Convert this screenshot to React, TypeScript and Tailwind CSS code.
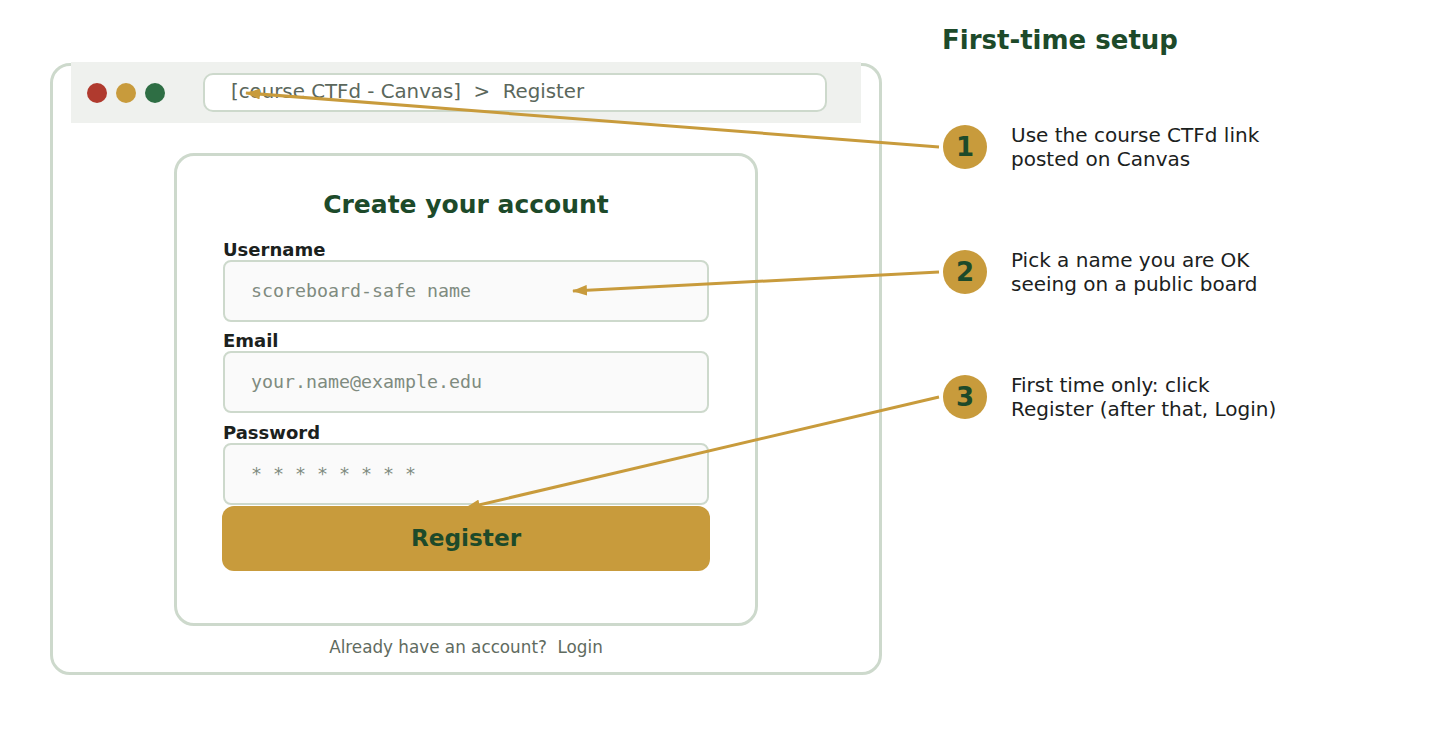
import React from "react";

const GOLD = "#c89b3c";

function Field({ label, value, gap }: { label: string; value: string; gap: string }) {
  return (
    <div className={`flex flex-col ${gap}`}>
      <div className="h-[20px] leading-[20px] text-[18px] font-bold text-[#1b211d]">{label}</div>
      <div className="w-[486px] h-[62px] rounded-[8px] border-2 border-[#cdd9cc] bg-[#fafafa] pl-[26px] flex items-center">
        <span className="whitespace-pre text-[18.3px] text-[#7f8b80]" style={{ fontFamily: '"DejaVu Sans Mono", "Liberation Mono", monospace' }}>
          {value}
        </span>
      </div>
    </div>
  );
}

function Step({ n, lines }: { n: number; lines: string[] }) {
  return (
    <div className="flex items-center h-[48px]">
      <div className="w-[44px] h-[44px] rounded-full bg-[#c89b3c] flex items-center justify-center text-[26px] font-bold text-[#1d4a2a]">
        {n}
      </div>
      <div className="ml-[24px] text-[20px] leading-[24px] text-[#1b211d]">
        {lines.map((l) => (
          <div key={l}>{l}</div>
        ))}
      </div>
    </div>
  );
}

export default function App() {
  return (
    <div
      className="relative w-[1431px] h-[738px] bg-white flex items-start overflow-hidden"
      style={{ fontFamily: '"DejaVu Sans", "Liberation Sans", sans-serif' }}
    >
      {/* browser window mock */}
      <div className="ml-[50px] mt-[63px]">
        <div className="w-[832px] h-[612px] rounded-[20px] border-[3px] border-[#cdd9cc] bg-white flex flex-col items-center">
          <div className="-mt-[4px] w-[790px] h-[61px] bg-[#eff1ee] flex items-center pl-[16px]">
            <div className="flex gap-[9px]">
              <span className="w-[20px] h-[20px] rounded-full bg-[#b03a2e]" />
              <span className="w-[20px] h-[20px] rounded-full bg-[#c89b3c]" />
              <span className="w-[20px] h-[20px] rounded-full bg-[#2e6e44]" />
            </div>
            <div className="ml-[38px] w-[624px] h-[39px] rounded-[10px] border-2 border-[#cdd9cc] bg-white flex items-center pl-[26px]">
              <span className="whitespace-pre text-[19.8px] text-[#5b675c] -mt-[1px]">{"[course CTFd - Canvas]  >  Register"}</span>
            </div>
          </div>

          {/* sign-up card */}
          <div className="mt-[30px] w-[584px] h-[473px] rounded-[20px] border-[3px] border-[#cdd9cc] bg-white flex flex-col items-center pt-[34px]">
            <div className="h-[30px] leading-[30px] text-[25px] font-bold text-[#1d4a2a]">Create your account</div>
            <Field label="Username" value="scoreboard-safe name" gap="mt-[20px]" />
            <Field label="Email" value="your.name@example.edu" gap="mt-[9px]" />
            <Field label="Password" value="* * * * * * * *" gap="mt-[10px]" />
            <div className="mt-[1px] w-[488px] h-[65px] rounded-[12px] bg-[#c89b3c] flex items-center justify-center text-[23.2px] font-bold text-[#1d4a2a]">
              Register
            </div>
          </div>
          <div className="mt-[11px] h-[20px] leading-[20px] whitespace-pre text-[16.8px] text-[#5f6b60]">
            {"Already have an account?  Login"}
          </div>
        </div>
      </div>

      {/* setup steps */}
      <div className="ml-[60px] mt-[24px] flex flex-col">
        <div className="h-[32px] leading-[32px] text-[26px] font-bold text-[#1d4a2a]">First-time setup</div>
        <div className="ml-[1px] mt-[67px] flex flex-col gap-[77px]">
          <Step n={1} lines={["Use the course CTFd link", "posted on Canvas"]} />
          <Step n={2} lines={["Pick a name you are OK", "seeing on a public board"]} />
          <Step n={3} lines={["First time only: click", "Register (after that, Login)"]} />
        </div>
      </div>

      {/* callout arrows */}
      <svg className="absolute inset-0 pointer-events-none" width="1431" height="738" viewBox="0 0 1431 738">
        <defs>
          <marker id="tip" viewBox="0 0 14 10" refX="13" refY="5" markerWidth="15" markerHeight="11" markerUnits="userSpaceOnUse" orient="auto">
            <path d="M0,0 L14,5 L0,10 z" fill={GOLD} />
          </marker>
        </defs>
        <g stroke={GOLD} strokeWidth="3" fill="none">
          <line x1="939" y1="147" x2="246" y2="93" markerEnd="url(#tip)" />
          <line x1="939" y1="272" x2="573" y2="291" markerEnd="url(#tip)" />
          <line x1="939" y1="397" x2="466" y2="508" markerEnd="url(#tip)" />
        </g>
      </svg>
    </div>
  );
}
